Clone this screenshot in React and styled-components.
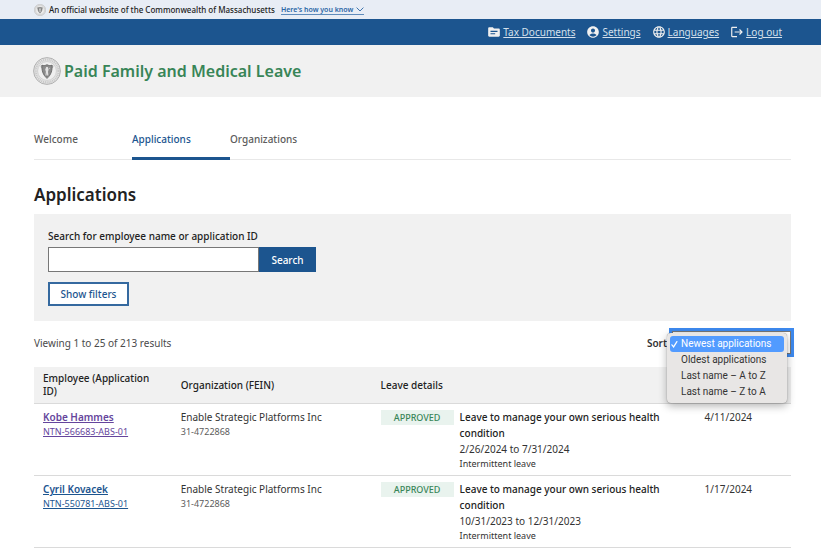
import { useState } from "react";
import styled, { createGlobalStyle } from "styled-components";
import { MdTopic, MdAccountCircle, MdLanguage, MdLogout } from "react-icons/md";

const sortOptions = [
  "Newest applications",
  "Oldest applications",
  "Last name – A to Z",
  "Last name – Z to A",
];

const applications = [
  {
    name: "Kobe Hammes",
    id: "NTN-566683-ABS-01",
    org: "Enable Strategic Platforms Inc",
    fein: "31-4722868",
    status: "Approved",
    reason: "Leave to manage your own serious health condition",
    dates: "2/26/2024 to 7/31/2024",
    type: "Intermittent leave",
    updated: "4/11/2024",
    visited: true,
  },
  {
    name: "Cyril Kovacek",
    id: "NTN-550781-ABS-01",
    org: "Enable Strategic Platforms Inc",
    fein: "31-4722868",
    status: "Approved",
    reason: "Leave to manage your own serious health condition",
    dates: "10/31/2023 to 12/31/2023",
    type: "Intermittent leave",
    updated: "1/17/2024",
    visited: false,
  },
];

function Seal({ size }) {
  return (
    <svg width={size} height={size} viewBox="0 0 28 28" aria-hidden="true">
      <circle cx="14" cy="14" r="13.4" fill="#e4e4e4" stroke="#ababab" strokeWidth="0.9" />
      <circle cx="14" cy="14" r="11.4" fill="none" stroke="#c6c6c6" strokeWidth="2.2" strokeDasharray="1 0.9" />
      <circle cx="14" cy="14" r="9.4" fill="#efefef" stroke="#b8b8b8" strokeWidth="0.5" />
      <path d="M8 8.6h12v1.6l-1.6 1.2c.2 4-1 7.6-4.4 10.6-3.4-3-4.6-6.6-4.4-10.6L8 10.2z" fill="#c4c4c4" stroke="#999" strokeWidth="0.5" />
      <path d="M9 8.2c1.6.8 3.2.4 5-.5 1.8.9 3.4 1.3 5 .5.4 5.2-.8 9.400-5 12.400-4.200-3-5.400-7.200-5-12.400z" fill="#8b8b8b" stroke="#696969" strokeWidth="0.9" />
      <path d="M13.2 10h1.600l.8 2.600-.6 2.200.4 3.600h-1.200l-.3-2.400-.4 2.400h-1.100l.5-3.600-.7-2.200z" fill="#e2e2e2" />
      <circle cx="16.6" cy="11.3" r="0.5" fill="#ddd" />
    </svg>
  );
}

function App() {
  const [sort, setSort] = useState(sortOptions[0]);

  return (
    <>
      <GlobalStyle />
      <OfficialBanner>
        <Seal size={12} />
        <span>An official website of the Commonwealth of Massachusetts</span>
        <BannerToggle type="button">
          Here's how you know
          <svg width="8" height="5" viewBox="0 0 8 5" aria-hidden="true">
            <path d="M0.6 0.6L4 4 7.4 0.6" fill="none" stroke="currentColor" strokeWidth="0.9" />
          </svg>
        </BannerToggle>
      </OfficialBanner>
      <UtilityNav aria-label="Account">
        <UtilityLink href="#tax"><MdTopic /><span>Tax Documents</span></UtilityLink>
        <UtilityLink href="#settings"><MdAccountCircle /><span>Settings</span></UtilityLink>
        <UtilityLink href="#languages"><MdLanguage /><span>Languages</span></UtilityLink>
        <UtilityLink href="#logout"><MdLogout /><span>Log out</span></UtilityLink>
      </UtilityNav>
      <SiteHeader>
        <Seal size={28} />
        <SiteTitle>Paid Family and Medical Leave</SiteTitle>
      </SiteHeader>
      <Main>
        <Tabs aria-label="Sections">
          <Tab href="#welcome">Welcome</Tab>
          <Tab href="#applications" $active aria-current="page">Applications</Tab>
          <Tab href="#organizations">Organizations</Tab>
        </Tabs>
        <PageTitle>Applications</PageTitle>
        <SearchPanel>
          <SearchLabel htmlFor="search">Search for employee name or application ID</SearchLabel>
          <SearchRow>
            <SearchInput id="search" type="text" />
            <SearchButton type="submit">Search</SearchButton>
          </SearchRow>
          <FilterButton type="button">Show filters</FilterButton>
        </SearchPanel>
        <ResultsBar>
          <p>Viewing 1 to 25 of 213 results</p>
          <SortField>
            <SortLabel htmlFor="sort">Sort</SortLabel>
            <SortBox>
              <SortSelect id="sort" value={sort} onChange={(e) => setSort(e.target.value)}>
                {sortOptions.map((option) => <option key={option}>{option}</option>)}
              </SortSelect>
              <SortMenu role="listbox" aria-label="Sort">
                {sortOptions.map((option) => (
                  <SortOption
                    key={option}
                    role="option"
                    aria-selected={option === sort}
                    $selected={option === sort}
                    onClick={() => setSort(option)}
                  >
                    <svg width="7" height="8" viewBox="0 0 7 8" aria-hidden="true">
                      {option === sort && (
                        <path d="M0.9 4.8L2.6 6.9 5.9 1.6" fill="none" stroke="currentColor" strokeWidth="1.2" strokeLinecap="round" />
                      )}
                    </svg>
                    {option}
                  </SortOption>
                ))}
              </SortMenu>
            </SortBox>
          </SortField>
        </ResultsBar>
        <Table>
          <colgroup>
            <col width="18.2%" />
            <col width="26.4%" />
            <col width="42.8%" />
            <col />
          </colgroup>
          <thead>
            <tr>
              <th>Employee (Application ID)</th>
              <th>Organization (FEIN)</th>
              <th>Leave details</th>
              <th aria-label="Date" />
            </tr>
          </thead>
          <tbody>
            {applications.map((item) => (
              <tr key={item.id}>
                <td>
                  <EmployeeLink href="#application" $visited={item.visited}>
                    <strong>{item.name}</strong>
                    <small>{item.id}</small>
                  </EmployeeLink>
                </td>
                <td>
                  {item.org}
                  <Fein>{item.fein}</Fein>
                </td>
                <td>
                  <Leave>
                    <Status>{item.status}</Status>
                    <div>
                      <strong>{item.reason}</strong>
                      <p>{item.dates}</p>
                      <small>{item.type}</small>
                    </div>
                  </Leave>
                </td>
                <td>{item.updated}</td>
              </tr>
            ))}
          </tbody>
        </Table>
      </Main>
    </>
  );
}

const GlobalStyle = createGlobalStyle`
  * {
    box-sizing: border-box;
  }
  body {
    margin: 0;
    background-color: #fff;
    color: #333;
    font-family: "Noto Sans", sans-serif;
    font-size: 10px;
    line-height: 16px;
  }
  p {
    margin: 0;
  }
  button, input, select {
    font-family: inherit;
  }
  strong {
    font-weight: 500;
  }
`;

const OfficialBanner = styled.div`
  display: flex;
  align-items: center;
  height: 19px;
  padding: 0 34px;
  gap: 3px;
  font-size: 8px;
  font-weight: 500;
  color: #222;
  background-color: #e8edf5;
`;

const BannerToggle = styled.button`
  display: flex;
  align-items: center;
  gap: 3px;
  margin-left: 3px;
  padding: 0;
  border: 0;
  border-bottom: 1px solid #5f8bbb;
  background: none;
  font-size: 7px;
  font-weight: 600;
  line-height: 9px;
  color: #2a66a5;
`;

const UtilityNav = styled.nav`
  display: flex;
  align-items: center;
  justify-content: flex-end;
  gap: 11px;
  height: 26px;
  padding: 0 39px;
  background-color: #1c558f;
`;

const UtilityLink = styled.a`
  display: flex;
  align-items: center;
  gap: 2px;
  color: #d4e0ec;
  text-decoration: none;

  svg {
    width: 14px;
    height: 14px;
    color: #f0f0f0;
  }
  span {
    text-decoration: underline;
  }
`;

const SiteHeader = styled.header`
  display: flex;
  align-items: center;
  gap: 3px;
  height: 52px;
  padding: 0 33px;
  background-color: #f1f1f1;
`;

const SiteTitle = styled.div`
  font-size: 16px;
  font-weight: 600;
  line-height: 24px;
  color: #388557;
`;

const Main = styled.main`
  padding: 29px 30px 0 34px;
`;

const Tabs = styled.nav`
  display: flex;
  border-bottom: 1px solid #e8e8e8;
`;

const Tab = styled.a`
  width: 98px;
  margin-bottom: -1px;
  padding: 5px 0 10px;
  border-bottom: 3px solid ${({ $active }) => ($active ? "#1c558f" : "transparent")};
  font-weight: 500;
  text-decoration: none;
  color: ${({ $active }) => ($active ? "#1c558f" : "#5c5c5c")};
`;

const PageTitle = styled.h1`
  margin: 23px 0 7px;
  font-size: 17px;
  font-weight: 600;
  line-height: 24px;
  color: #222;
`;

const SearchPanel = styled.form`
  padding: 14px 14px 15px;
  background-color: #f1f1f1;
`;

const SearchLabel = styled.label`
  display: block;
  margin-bottom: 3px;
  font-weight: 500;
  color: #222;
`;

const SearchRow = styled.div`
  display: flex;
  margin-bottom: 10px;
`;

const SearchInput = styled.input`
  width: 211px;
  height: 25px;
  padding: 0 6px;
  border: 1px solid #777;
  border-radius: 0;
  background-color: #fff;
  font-size: 10px;
`;

const SearchButton = styled.button`
  width: 57px;
  border: 0;
  background-color: #1c558f;
  color: #fff;
  font-size: 10px;
  font-weight: 500;
`;

const FilterButton = styled.button`
  display: block;
  width: 81px;
  height: 24px;
  padding: 0;
  border: 2px solid #35699f;
  background-color: #fff;
  color: #1c558f;
  font-size: 10px;
  font-weight: 500;
`;

const ResultsBar = styled.div`
  display: flex;
  align-items: center;
  justify-content: space-between;
  padding: 10px 0 13px;
  color: #4a4a4a;
`;

const SortField = styled.div`
  display: flex;
  align-items: center;
  gap: 5px;
`;

const SortLabel = styled.label`
  font-weight: 600;
  color: #333;
`;

const SortBox = styled.div`
  position: relative;
  display: flex;
`;

const SortSelect = styled.select`
  width: 119px;
  height: 23px;
  border: 1px solid #777;
  border-radius: 0;
  outline: 3px solid #3d89ee;
  appearance: none;
  background-color: #fff;
  color: #333;
  font-size: 10px;
`;

/* open list, laid over the select and the table header */
const SortMenu = styled.ul`
  position: absolute;
  top: 2px;
  left: -5px;
  width: 120px;
  margin: 0;
  padding: 3px;
  border-radius: 4px;
  background-color: #e8e6e5;
  box-shadow: 0 0 1px rgba(0, 0, 0, 0.5), 0 3px 8px rgba(0, 0, 0, 0.3);
  list-style: none;
`;

const SortOption = styled.li`
  display: flex;
  align-items: center;
  gap: 3px;
  padding-left: 1px;
  border-radius: 3px;
  font-family: Roboto, sans-serif;
  white-space: nowrap;
  color: ${({ $selected }) => ($selected ? "#fff" : "#333")};
  background-color: ${({ $selected }) => ($selected ? "#529bff" : "transparent")};
`;

const Table = styled.table`
  width: 100%;
  border-collapse: collapse;
  table-layout: fixed;

  th, td {
    padding: 5px 9px;
    border-bottom: 1px solid #dadada;
    text-align: left;
    vertical-align: top;
  }
  th {
    background-color: #f1f1f1;
    font-weight: 500;
    line-height: 13px;
    color: #222;
    vertical-align: middle;
  }
  td:last-child {
    white-space: nowrap;
  }
  small {
    display: block;
    font-size: 9px;
    line-height: 13px;
  }
`;

const EmployeeLink = styled.a`
  color: ${({ $visited }) => ($visited ? "#65459c" : "#1c558f")};

  strong {
    display: block;
    font-weight: 600;
  }
`;

const Fein = styled.small`
  color: #5c5c5c;
`;

const Leave = styled.div`
  display: flex;
  align-items: flex-start;
  gap: 6px;

  strong {
    display: block;
    color: #222;
  }
`;

const Status = styled.span`
  flex: none;
  width: 73px;
  margin-top: 1px;
  background-color: #e9f3ee;
  color: #388557;
  font-size: 9px;
  font-weight: 500;
  line-height: 15px;
  text-align: center;
  text-transform: uppercase;
`;

export default App;
